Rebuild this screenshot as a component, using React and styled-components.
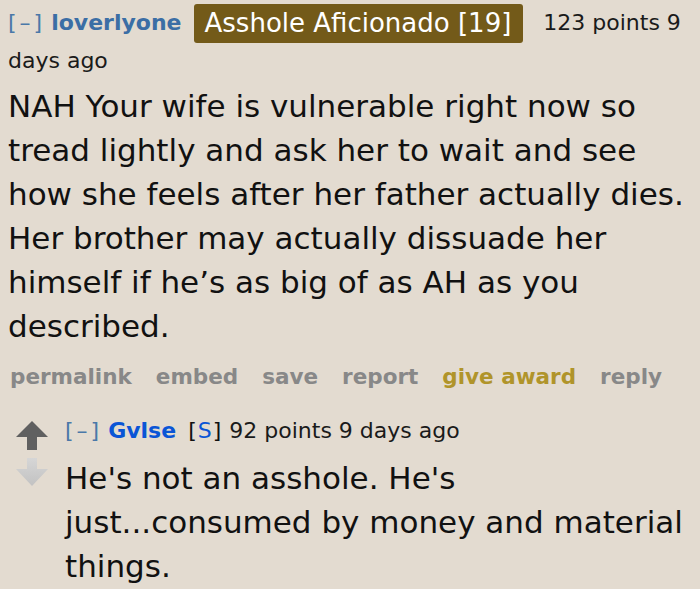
import React from 'react';
import styled, { createGlobalStyle } from 'styled-components';

const GlobalStyle = createGlobalStyle`
  html, body {
    margin: 0;
    padding: 0;
    background: #e3dbd0;
  }
  body {
    font-family: "DejaVu Sans", Verdana, sans-serif;
    color: #111;
    width: 700px;
    height: 589px;
    overflow: hidden;
  }
`;

const Page = styled.div`
  padding: 4px 0 0 8px;
`;

const Tagline = styled.div`
  font-size: 22px;
  line-height: 36px;
  color: #1a1a1a;
`;

const Expand = styled.span`
  color: #4a78a8;
  letter-spacing: 3px;
  margin-right: 6px;
`;

const Author = styled.span`
  color: ${({ $op }) => ($op ? '#0a55d6' : '#3b6ea5')};
  font-weight: bold;
  margin-right: 12px;
`;

const Flair = styled.span`
  display: inline-block;
  background: #735a19;
  color: #fff;
  font-size: 26px;
  line-height: 39px;
  margin-right: 20px;
  padding: 0 12px 0 11px;
  border-radius: 3px;
  vertical-align: middle;
`;

const Submitter = styled.span`
  color: #111;
  letter-spacing: 1px;
  margin-right: 7px;
  b {
    color: #0a55d6;
    font-weight: normal;
  }
`;

const Body = styled.div`
  font-size: 31px;
  line-height: 44px;
  color: #111;
  margin-top: 5px;
`;

const Buttons = styled.ul`
  display: flex;
  gap: 24px;
  list-style: none;
  margin: 15px 0 0 0;
  padding: 0 0 0 2px;
  font-size: 21.5px;
  font-weight: bold;
  line-height: 28px;
`;

const ButtonLink = styled.li`
  color: ${({ $gold }) => ($gold ? '#b0942a' : '#888')};
`;

const Child = styled.div`
  display: flex;
  margin-top: 25px;
  padding-left: 8px;
`;

const Votes = styled.div`
  display: flex;
  flex-direction: column;
  gap: 8px;
  width: 32px;
  margin-right: 17px;
  padding-top: 5px;
`;

const Entry = styled.div`
  flex: 1;
`;

const ChildTagline = styled(Tagline)`
  line-height: 30px;
`;

const ChildBody = styled(Body)`
  margin-top: 10px;
`;

const UpArrow = () => (
  <svg width="32" height="29" viewBox="0 0 32 29">
    <polygon points="16,0 32,16 21,16 21,29 11,29 11,16 0,16" fill="#606060" />
  </svg>
);

const DownArrow = () => (
  <svg width="32" height="28" viewBox="0 0 32 28">
    <defs>
      <linearGradient id="dn" x1="0" y1="0" x2="0" y2="1">
        <stop offset="0" stopColor="#d6d6d6" />
        <stop offset="1" stopColor="#c2c2c2" />
      </linearGradient>
    </defs>
    <polygon points="11,0 21,0 21,11 32,11 16,28 0,11 11,11" fill="url(#dn)" />
  </svg>
);

export default function App() {
  return (
    <>
      <GlobalStyle />
      <Page>
        <Tagline>
          <Expand>[–]</Expand>
          <Author>loverlyone</Author>
          <Flair>Asshole Aficionado [19]</Flair>
          123 points 9 days ago
        </Tagline>
        <Body>
          NAH Your wife is vulnerable right now so tread lightly and ask her to wait and see
          how she feels after her father actually dies. Her brother may actually dissuade her
          himself if he’s as big of as AH as you described.
        </Body>
        <Buttons>
          <ButtonLink>permalink</ButtonLink>
          <ButtonLink>embed</ButtonLink>
          <ButtonLink>save</ButtonLink>
          <ButtonLink>report</ButtonLink>
          <ButtonLink $gold>give award</ButtonLink>
          <ButtonLink>reply</ButtonLink>
        </Buttons>
        <Child>
          <Votes>
            <UpArrow />
            <DownArrow />
          </Votes>
          <Entry>
            <ChildTagline>
              <Expand>[–]</Expand>
              <Author $op>Gvlse</Author>
              <Submitter>
                [<b>S</b>]
              </Submitter>
              92 points 9 days ago
            </ChildTagline>
            <ChildBody>
              He's not an asshole. He's just...consumed by money and material things.
            </ChildBody>
          </Entry>
        </Child>
      </Page>
    </>
  );
}
